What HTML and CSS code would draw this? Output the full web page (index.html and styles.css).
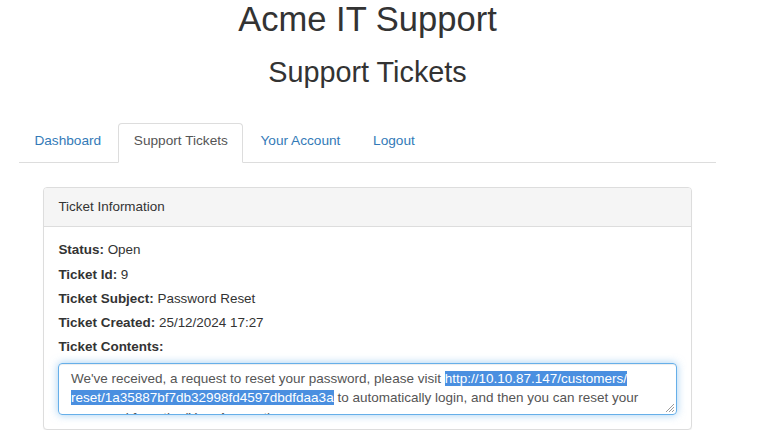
FILE: index.html
```html
<!DOCTYPE html>
<html lang="en">
<head>
<meta charset="utf-8">
<title>Acme IT Support - Support Tickets</title>
<link rel="stylesheet" href="styles.css">
</head>
<body>
<div class="page">
  <h1 class="title">Acme IT Support</h1>
  <h2 class="subtitle">Support Tickets</h2>
  <ul class="tabs">
    <li class="tab"><a href="#">Dashboard</a></li>
    <li class="tab active"><a href="#">Support Tickets</a></li>
    <li class="tab"><a href="#">Your Account</a></li>
    <li class="tab"><a href="#">Logout</a></li>
  </ul>
  <div class="panel">
    <div class="panel-heading">Ticket Information</div>
    <div class="panel-body">
      <div class="field"><b>Status:</b> Open</div>
      <div class="field"><b>Ticket Id:</b> 9</div>
      <div class="field"><b>Ticket Subject:</b> Password Reset</div>
      <div class="field"><b>Ticket Created:</b> 25/12/2024 17:27</div>
      <div class="field"><b>Ticket Contents:</b></div>
      <div class="textbox">
        <span class="line">We've received, a request to reset your password, please visit <span class="sel">http://10.10.87.147/customers/</span></span>
        <span class="line"><span class="sel">reset/1a35887bf7db32998fd4597dbdfdaa3a</span> to automatically login, and then you can reset your</span>
        <span class="line">password from the 'Your Account' page.</span>
        <svg class="grip" width="10" height="10" viewBox="0 0 10 10">
          <path d="M9 1 L1 9 M9 4 L4 9 M9 7 L7 9" stroke="#9a9a9a" stroke-width="1"/>
        </svg>
      </div>
    </div>
  </div>
</div>
</body>
</html>
```

FILE: styles.css
```css
html, body {
  margin: 0;
  padding: 0;
  background: #fff;
}

body {
  font-family: "Liberation Sans", Arial, sans-serif;
  font-size: 13.44px;
  line-height: 19.2px;
  color: #333;
}

.page {
  width: 697px;
  margin-left: 19px;
}

.title {
  margin: 0;
  font-size: 34.56px;
  line-height: 38px;
  font-weight: normal;
  text-align: center;
  color: #333;
}

.subtitle {
  margin: 19.2px 0 0;
  font-size: 28.8px;
  line-height: 31.7px;
  font-weight: normal;
  text-align: center;
  color: #333;
}

.tabs {
  list-style: none;
  margin: 34px 0 0;
  padding: 0;
  display: flex;
  border-bottom: 1px solid #ddd;
}

.tab {
  margin-bottom: -1px;
}

.tab a {
  display: block;
  padding: 7px 14.4px 12.2px;
  margin-right: 1.92px;
  border: 1px solid transparent;
  border-radius: 4px 4px 0 0;
  color: #337ab7;
  text-decoration: none;
  font-size: 13.65px;
  line-height: 19.2px;
}

.tab.active a {
  color: #555;
  background: #fff;
  border-color: #ddd #ddd transparent;
}

.panel {
  margin: 23.6px 0 0 24px;
  width: 647px;
  border: 1px solid #ddd;
  border-radius: 4px;
  box-shadow: 0 1px 1px rgba(0, 0, 0, 0.05);
  background: #fff;
}

.panel-heading {
  padding: 9.6px 14.4px;
  background: #f5f5f5;
  border-bottom: 1px solid #ddd;
  border-radius: 3px 3px 0 0;
  color: #333;
}

.panel-body {
  padding: 11px 14.4px 14.4px;
}

.field {
  line-height: 24.25px;
}

.field b {
  font-weight: bold;
}

.textbox {
  position: relative;
  margin-top: 3.8px;
  height: 51.5px;
  box-sizing: border-box;
  padding: 4.3px 11.5px;
  border: 1px solid #66afe9;
  border-radius: 4px;
  box-shadow: inset 0 1px 1px rgba(0, 0, 0, 0.075), 0 0 8px rgba(102, 175, 233, 0.6);
  overflow: hidden;
  color: #555;
  font-size: 13.5px;
}

.line {
  display: block;
  white-space: nowrap;
  line-height: 19.6px;
}

.sel {
  background: #4a8fe0;
  color: #fff;
}

.grip {
  position: absolute;
  right: 1px;
  bottom: 1px;
}
```
